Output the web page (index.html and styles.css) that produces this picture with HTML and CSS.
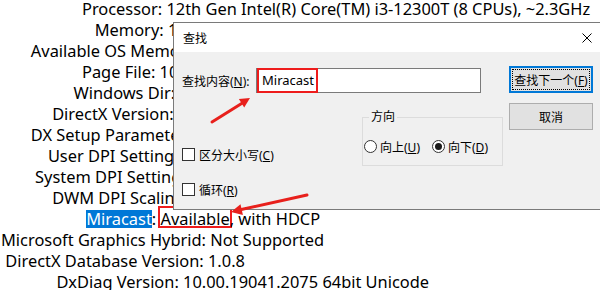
FILE: index.html
```html
<!DOCTYPE html>
<html lang="zh-CN">
<head>
    <meta charset="UTF-8">
    <meta name="viewport" content="width=device-width, initial-scale=1.0">
    <title>DxDiag.txt - 记事本</title>
    <link rel="stylesheet" href="styles.css">
</head>
<body>
    <!-- notepad text, label column padded with spaces like the real file -->
<pre class="doc">                   Processor: 12th Gen Intel(R) Core(TM) i3-12300T (8 CPUs), ~2.3GHz
                      Memory: 16384MB RAM
       Available OS Memory: 16108MB RAM
                   Page File: 10563MB used, 8166MB available
                 Windows Dir: C:\WINDOWS
            DirectX Version: DirectX 12
       DX Setup Parameters: Not found
           User DPI Setting: 96 DPI (100 percent)
        System DPI Setting: 96 DPI (100 percent)
            DWM DPI Scaling: Disabled
                    <span class="sel">Miracast</span>: <span class="mark">Available</span>, with HDCP
Microsoft Graphics Hybrid: Not Supported
 DirectX Database Version: 1.0.8
             DxDiag Version: 10.00.19041.2075 64bit Unicode</pre>

    <div class="find-dialog">
        <div class="titlebar">
            <span>查找</span>
            <svg class="close" width="10" height="10" viewBox="0 0 10 10">
                <path d="M0.5 0.5 L9.5 9.5 M9.5 0.5 L0.5 9.5" stroke="#000" stroke-width="1" fill="none"/>
            </svg>
        </div>
        <div class="dlg-body">
            <div class="dlg-main">
                <div class="find-row">
                    <label class="find-label">查找内容(<u>N</u>):</label>
                    <div class="field"><span class="field-text">Miracast</span></div>
                </div>
                <div class="options">
                    <div class="checks">
                        <div class="check"><span class="box"></span><span>区分大小写(<u>C</u>)</span></div>
                        <div class="check"><span class="box"></span><span>循环(<u>R</u>)</span></div>
                    </div>
                    <fieldset class="direction">
                        <legend>方向</legend>
                        <div class="radios">
                            <span class="radio"><span class="circle"></span><span>向上(<u>U</u>)</span></span>
                            <span class="radio on"><span class="circle"></span><span>向下(<u>D</u>)</span></span>
                        </div>
                    </fieldset>
                </div>
            </div>
            <div class="dlg-buttons">
                <button class="btn default"><span class="focus"><span>查找下一个(<u>F</u>)</span></span></button>
                <button class="btn">取消</button>
            </div>
        </div>
    </div>

    <!-- red annotation arrows -->
    <svg class="arrows" width="600" height="290" viewBox="0 0 600 290">
        <line x1="212" y1="122" x2="244" y2="102" stroke="#e8201c" stroke-width="3" stroke-linecap="round"/>
        <polygon points="250,98 244.2,107.6 238.9,99.1" fill="#e8201c"/>
        <line x1="307" y1="195" x2="239" y2="210" stroke="#e8201c" stroke-width="3" stroke-linecap="round"/>
        <polygon points="231,212 240.5,204.3 242.9,215" fill="#e8201c"/>
    </svg>
</body>
</html>
```

FILE: styles.css
```css
html, body {
    margin: 0;
    height: 100%;
    overflow: hidden;
    background: #fff;
}
body {
    position: relative;
    color: #000;
    font-family: "Noto Sans", "Noto Sans CJK SC", sans-serif;
}

/* notepad text */
.doc {
    margin: -2px 0 0;
    padding-left: 1px;
    font: 16.4px/21px "Noto Sans", sans-serif;
    white-space: pre;
}
.sel {
    display: inline-block;
    line-height: 18px;
    background: #0078d7;
    color: #fff;
}
.mark {
    display: inline-block;
    line-height: 15px;
    padding-top: 3px;
    outline: 2px solid #ee1c1c;
}

/* find dialog */
.find-dialog {
    position: absolute;
    left: 173px;
    top: 22px;
    width: 431px;
    height: 188px;
    box-sizing: border-box;
    border: 1px solid #7a7a7a;
    background: #f0f0f0;
    font-size: 12px;
    display: flex;
    flex-direction: column;
}
.titlebar {
    height: 29px;
    background: #fff;
    display: flex;
    align-items: center;
    justify-content: space-between;
    padding: 0 11px 0 9px;
}
.close {
    display: block;
}
.dlg-body {
    flex: 1;
    display: flex;
    padding-left: 8px;
}
.dlg-main {
    width: 321px;
}
.find-row {
    margin-top: 16px;
    height: 25px;
    display: flex;
    align-items: center;
}
.find-label {
    width: 74px;
}
.field {
    width: 225px;
    height: 25px;
    box-sizing: border-box;
    border: 1px solid #7a7a7a;
    background: #fff;
    display: flex;
}
.field-text {
    height: 25px;
    margin: -1px 0;
    box-sizing: border-box;
    border: 2px solid #ee1c1c;
    padding: 0 2px 0 3px;
    font-size: 13px;
    line-height: 21px;
}
.options {
    margin-top: 17px;
    display: flex;
    align-items: flex-start;
}
.checks {
    padding-top: 38px;
}
.check {
    height: 13px;
    display: flex;
    align-items: center;
    gap: 4px;
}
.check + .check {
    margin-top: 22px;
}
.box {
    width: 13px;
    height: 13px;
    box-sizing: border-box;
    border: 1px solid #333;
    background: #fff;
}
.direction {
    margin: 0 0 0 auto;
    width: 141px;
    box-sizing: border-box;
    min-width: 0;
    border: 1px solid #dcdcdc;
    padding: 0 0 12px 1px;
}
.direction legend {
    margin-left: 5px;
    padding: 0 2px;
    line-height: 14px;
}
.radios {
    padding-top: 16px;
    height: 13px;
    display: flex;
    gap: 12px;
}
.radio {
    display: flex;
    align-items: center;
    gap: 3px;
}
.circle {
    width: 13px;
    height: 13px;
    box-sizing: border-box;
    border: 1px solid #333;
    border-radius: 50%;
    background: #fff;
    display: flex;
    align-items: center;
    justify-content: center;
}
.radio.on .circle::after {
    content: "";
    width: 7px;
    height: 7px;
    border-radius: 50%;
    background: #1a1a1a;
}
.dlg-buttons {
    margin-left: 6px;
    padding-top: 14px;
    display: flex;
    flex-direction: column;
    gap: 10px;
}
.btn {
    width: 84px;
    height: 27px;
    box-sizing: border-box;
    margin: 0;
    padding: 0;
    border: 1px solid #adadad;
    background: #e1e1e1;
    font: inherit;
    color: #000;
}
.btn.default {
    border: 2px solid #0078d7;
    padding: 1px;
}
.focus {
    display: flex;
    align-items: center;
    justify-content: center;
    height: 100%;
    box-sizing: border-box;
    border: 1px dotted #000;
}

.arrows {
    position: absolute;
    left: 0;
    top: 0;
    pointer-events: none;
}
```
